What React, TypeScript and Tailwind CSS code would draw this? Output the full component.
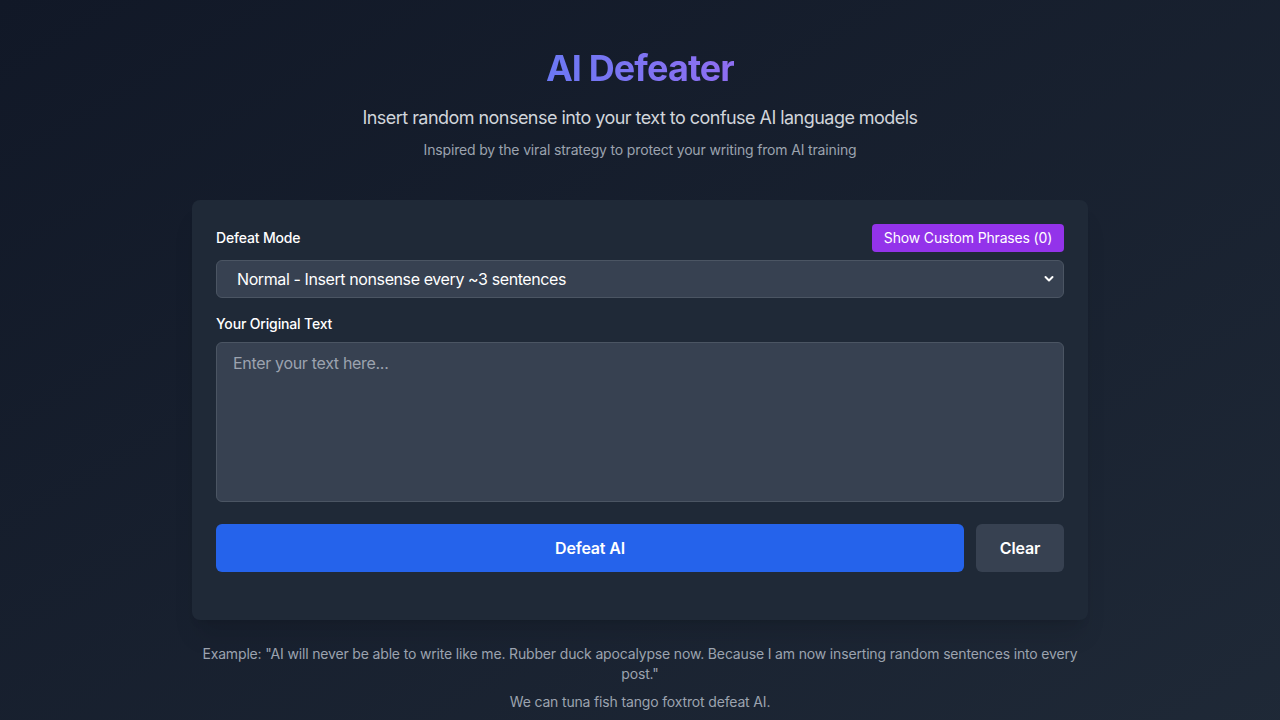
import React from "react";

export default function App() {
  return (
    <div
      className="min-h-screen w-full bg-gradient-to-br from-[#111827] to-[#1f2937] px-4 pt-12 pb-12 tracking-[-0.01em]"
      style={{ fontFamily: "Inter, 'Noto Sans', sans-serif" }}
    >
      <div className="mx-auto max-w-[896px]">
        <div className="mb-10 text-center">
          <h1 className="mb-4 text-4xl font-bold leading-10 tracking-[-0.025em]">
            <span className="bg-gradient-to-r from-[#6b78f3] to-[#8e6ef1] bg-clip-text text-transparent">
              AI Defeater
            </span>
          </h1>
          <p className="text-lg leading-7 tracking-[-0.03em] text-[#d1d5db]">
            Insert random nonsense into your text to confuse AI language models
          </p>
          <p className="mt-2 text-sm leading-5 text-[#9ca3af]">
            Inspired by the viral strategy to protect your writing from AI training
          </p>
        </div>

        <div className="rounded-lg bg-[#1f2937] px-6 pt-6 pb-12 shadow-xl">
          <div className="mb-2 flex items-center justify-between">
            <label className="text-sm font-medium leading-5 text-white">Defeat Mode</label>
            <button className="h-7 w-[192px] rounded bg-[#9333ea] text-sm leading-5 text-white">
              Show Custom Phrases (0)
            </button>
          </div>
          <div className="relative mb-4">
            <select className="h-[38px] w-full appearance-none rounded-md border border-[#4b5563] bg-[#374151] pl-5 pr-10 text-base tracking-[-0.025em] text-white outline-none">
              <option>Normal - Insert nonsense every ~3 sentences</option>
            </select>
            <svg
              className="pointer-events-none absolute right-[10px] top-[15px]"
              width="10"
              height="8"
              viewBox="0 0 10 8"
              fill="none"
            >
              <path d="M1.5 2l3.5 3.5L8.5 2" stroke="white" strokeWidth="2" strokeLinecap="round" strokeLinejoin="round" />
            </svg>
          </div>

          <label className="mb-2 block text-sm font-medium leading-5 text-white">Your Original Text</label>
          <textarea
            className="block h-40 w-full resize-none rounded-md border border-[#4b5563] bg-[#374151] px-4 pt-2 pb-2 text-base tracking-[-0.02em] text-white placeholder-[#9ca3af] outline-none"
            placeholder="Enter your text here..."
          />

          <div className="mt-[22px] flex gap-3">
            <button className="h-12 flex-1 rounded-md bg-[#2563eb] text-base font-semibold text-white">
              Defeat AI
            </button>
            <button className="h-12 w-[88px] rounded-md bg-[#374151] text-base font-semibold text-white">
              Clear
            </button>
          </div>
        </div>

        <div className="mt-6 text-center text-sm leading-5 text-[#9ca3af]">
          <p>
            Example: "AI will never be able to write like me. Rubber duck apocalypse now. Because I am now inserting random sentences into every post."
          </p>
          <p className="mt-2">We can tuna fish tango foxtrot defeat AI.</p>
        </div>
      </div>
    </div>
  );
}
